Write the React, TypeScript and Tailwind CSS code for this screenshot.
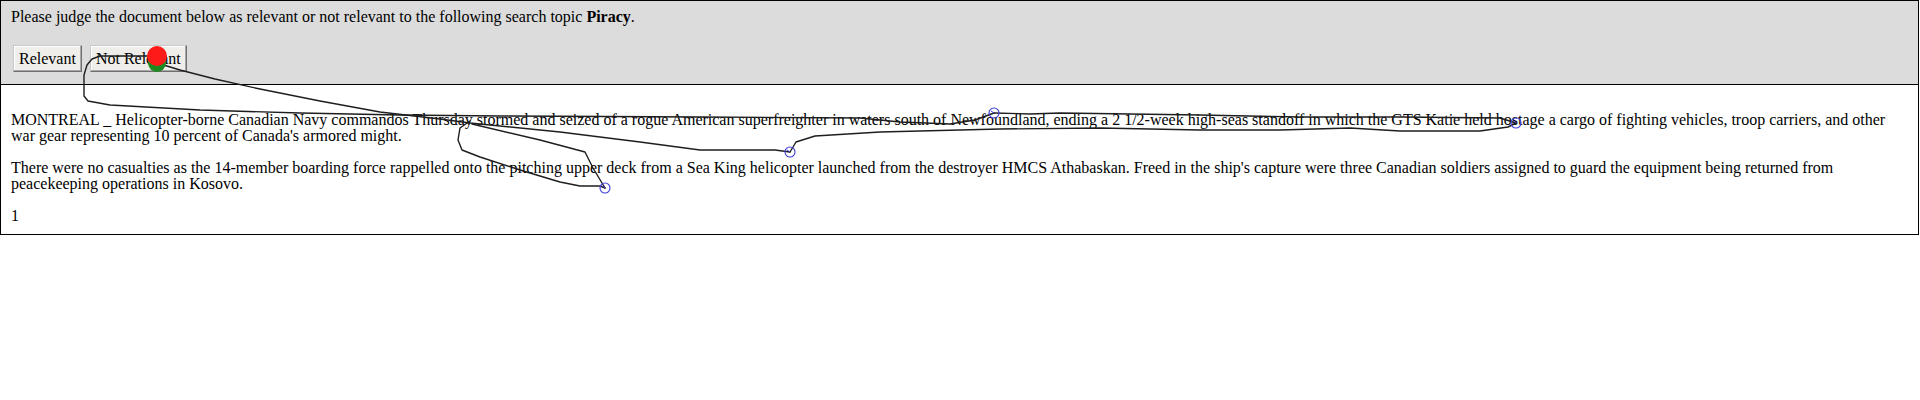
import React from 'react';

const traces: number[][][] = [
    // red dot, across "Not Rel", loop down and along the first line
    [[157, 56], [100, 56], [92, 59], [87, 65], [84, 75], [84, 96], [88, 101], [110, 105], [200, 110], [300, 113], [400, 115], [500, 116], [700, 117], [860, 118], [900, 122], [950, 124], [975, 120], [994, 113]],
    [[994, 113], [1030, 114], [1060, 113], [1200, 115], [1300, 117], [1400, 117], [1500, 118], [1516, 123]],
    // green dot, long diagonal to the first circle
    [[157, 63], [180, 70], [215, 79], [260, 89], [320, 101], [380, 112], [440, 119], [470, 123], [560, 132], [640, 142], [700, 150], [775, 150], [790, 152]],
    [[790, 152], [796, 142], [815, 136], [880, 132], [1000, 129], [1100, 128], [1200, 130], [1280, 130], [1350, 128], [1400, 131], [1480, 131], [1508, 127], [1516, 123]],
    // hook under "Thursday"
    [[470, 121], [460, 128], [458, 140], [462, 150], [480, 157], [520, 170], [560, 182], [580, 186], [600, 186], [605, 188]],
    [[472, 124], [540, 140], [585, 152], [593, 168], [605, 188]],
];

const stops = [
    [790, 152],
    [605, 188],
    [994, 113],
    [1516, 123],
];

function MouseTrace() {
    return (
        <svg className="absolute left-0 top-0 pointer-events-none" width={1920} height={240} viewBox="0 0 1920 240">
            {traces.map((pts, i) => (
                <polyline
                    key={i}
                    points={pts.map((p) => p.join(',')).join(' ')}
                    fill="none"
                    stroke="#1e1e1e"
                    strokeWidth={1.4}
                    strokeLinejoin="round"
                    strokeLinecap="round"
                />
            ))}
            {stops.map(([x, y], i) => (
                <g key={i}>
                    <circle cx={x} cy={y} r={5} fill="none" stroke="#3c3cd8" strokeWidth={1.1} />
                    <line x1={x} y1={y} x2={x - 3} y2={y - 2} stroke="#3c3cd8" strokeWidth={1} />
                </g>
            ))}
            <circle cx={157} cy={63} r={9} fill="#1f8a1f" />
            <circle cx={157} cy={56} r={10} fill="#ff1a1a" />
        </svg>
    );
}

function JudgeButton({ label }: { label: string }) {
    return (
        <button className="h-[27px] px-[5px] bg-[#efeeeb] text-black text-[16px] leading-none border border-t-[#c9c9c9] border-l-[#c9c9c9] border-b-[#6f6f6f] border-r-[#6f6f6f] shadow-[inset_-1px_-1px_0_#a8a8a8,inset_1px_1px_0_#ffffff]">
            {label}
        </button>
    );
}

export default function App() {
    return (
        <div className="relative w-[1919px] font-['Liberation_Serif',serif] text-[16px] text-black">
            {/* Question panel */}
            <div className="bg-[#dcdcdc] border border-black pt-[8px] pb-[12px] px-[10px]">
                <p className="leading-[16px]">
                    Please judge the document below as relevant or not relevant to the following search topic <b>Piracy</b>.
                </p>
                <div className="mt-[20px] flex gap-[8px] pl-[2px]">
                    <JudgeButton label="Relevant" />
                    <JudgeButton label="Not Relevant" />
                </div>
            </div>

            {/* Document */}
            <div className="bg-white border border-t-0 border-black px-[10px] pt-[27px] pb-[10px] leading-[16px] flex flex-col gap-[16px]">
                <p>
                    MONTREAL _ Helicopter-borne Canadian Navy commandos Thursday stormed and seized of a rogue American superfreighter in waters south of Newfoundland, ending a 2 1/2-week high-seas standoff in which the GTS Katie held hostage a cargo of fighting vehicles, troop carriers, and other war gear representing 10 percent of Canada's armored might.
                </p>
                <p>
                    There were no casualties as the 14-member boarding force rappelled onto the pitching upper deck from a Sea King helicopter launched from the destroyer HMCS Athabaskan. Freed in the ship's capture were three Canadian soldiers assigned to guard the equipment being returned from peacekeeping operations in Kosovo.
                </p>
                <p>1</p>
            </div>

            <MouseTrace />
        </div>
    );
}
